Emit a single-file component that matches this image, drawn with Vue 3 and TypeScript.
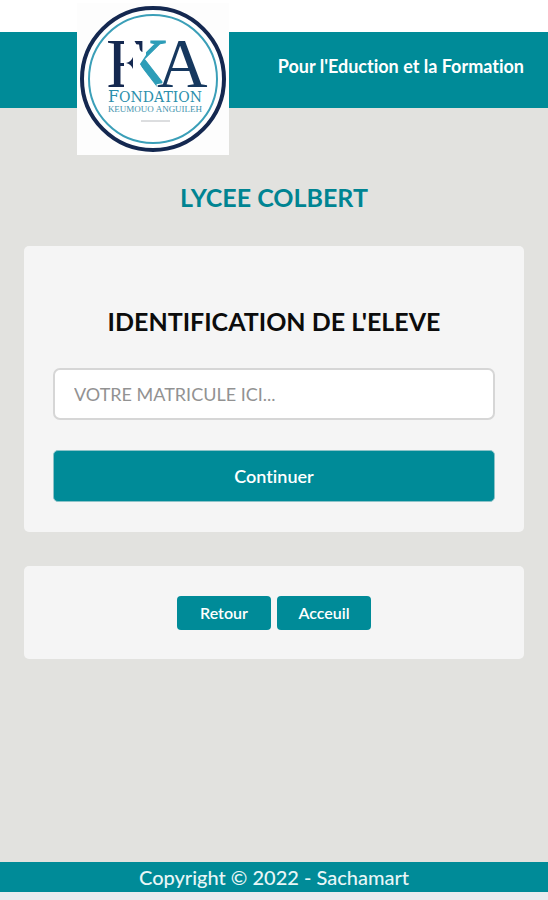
<script setup lang="ts">
import { ref } from 'vue'

const matricule = ref<string>('')
const links: { label: string; href: string }[] = [
  { label: 'Retour', href: '#retour' },
  { label: 'Acceuil', href: '#accueil' },
]
</script>

<template>
  <div class="page">
    <header class="header">
      <svg class="logo" viewBox="0 0 152 152" role="img" aria-label="Fondation Keumouo Anguileh">
        <defs>
          <clipPath id="stem-clip">
            <path d="M28 30H47V90H28ZM53 30H68V52L62 46Z" />
          </clipPath>
          <clipPath id="arm-clip">
            <path d="M69 30H100V90H78L63 61L69 52Z" />
          </clipPath>
        </defs>
        <rect width="152" height="152" fill="#fdfdfd" />
        <circle cx="76" cy="76" r="71" fill="#fff" stroke="#142850" stroke-width="4" />
        <circle cx="76" cy="76" r="64" fill="none" stroke="#3b9fb8" stroke-width="2" />
        <g class="mark">
          <text class="navy" x="29" y="84" clip-path="url(#stem-clip)">F</text>
          <path class="navy" d="M56 54V66Q54 61 49 60Q54 59 56 54Z" />
          <text class="teal" x="42" y="84" clip-path="url(#arm-clip)">K</text>
          <text class="front" x="80" y="84">A</text>
        </g>
        <text class="name" x="78" y="99" text-anchor="middle"><tspan class="initial">F</tspan>ONDATION</text>
        <text class="family" x="78" y="109" text-anchor="middle">KEUMOUO ANGUILEH</text>
        <path d="M64 118H93" stroke="#b9bcc0" stroke-width="1" />
      </svg>
      <p class="slogan">Pour l'Eduction et la Formation</p>
    </header>

    <main class="content">
      <h1 class="school">LYCEE COLBERT</h1>
      <form class="card form" @submit.prevent>
        <h2 class="title"><label for="matricule">IDENTIFICATION DE L'ELEVE</label></h2>
        <input id="matricule" v-model="matricule" class="field" type="text" placeholder="VOTRE MATRICULE ICI..." />
        <button class="submit" type="submit">Continuer</button>
      </form>
      <nav class="card links">
        <a v-for="link in links" :key="link.label" class="link" :href="link.href">{{ link.label }}</a>
      </nav>
    </main>

    <footer class="footer">Copyright © 2022 - Sachamart</footer>
  </div>
</template>

<style>
body {
  margin: 0;
  background: #e9ebee;
}
</style>

<style scoped>
.page {
  box-sizing: border-box;
  min-height: calc(100vh - 8px);
  display: flex;
  flex-direction: column;
  padding-top: 32px;
  background: linear-gradient(#fff 32px, #e2e2df 32px);
  font-family: Lato, "Liberation Sans", sans-serif;
  font-variant-ligatures: none;
}
.header {
  position: relative;
  display: flex;
  align-items: center;
  justify-content: flex-end;
  box-sizing: border-box;
  min-height: 76px;
  padding: 0 24px 8px;
  background: #008b98;
}
.logo {
  position: absolute;
  left: 14%;
  top: -29px;
  width: 152px;
  height: 152px;
}
.mark {
  font-family: "Liberation Serif", serif;
  font-size: 70px;
}
.navy {
  fill: #142850;
}
.teal {
  fill: #2d9db8;
  stroke: #2d9db8;
  stroke-width: 1px;
}
.front {
  fill: #16385f;
  stroke: #fff;
  stroke-width: 2px;
  paint-order: stroke;
}
.name {
  font-family: "DejaVu Serif", serif;
  font-size: 14px;
  fill: #2d8fac;
}
.initial {
  font-size: 16px;
}
.family {
  font-family: "Liberation Serif", serif;
  font-size: 9px;
  fill: #3f93ad;
}
.slogan {
  margin: 0;
  color: #fff;
  font-size: 18px;
  line-height: 24px;
  font-weight: 700;
}
.content {
  flex: 1;
  display: flex;
  flex-direction: column;
  padding: 72px 24px 24px;
}
.school {
  margin: 0 0 32px;
  color: #008492;
  font-size: 25px;
  line-height: 34px;
  font-weight: 700;
  text-align: center;
}
.card {
  border-radius: 5px;
  background: #f5f5f5;
}
.form {
  display: flex;
  flex-direction: column;
  padding: 58px 29px 30px;
}
.title {
  margin: 0 0 30px;
  color: #0c0c0c;
  font-size: 25px;
  line-height: 34px;
  font-weight: 700;
  text-align: center;
}
.field {
  box-sizing: border-box;
  width: 100%;
  height: 52px;
  margin-bottom: 30px;
  padding: 0 19px;
  border: 2px solid #d6d6d6;
  border-radius: 7px;
  background: #fff;
  color: #333;
  font-family: inherit;
  font-size: 18px;
}
.field::placeholder {
  color: #929292;
  opacity: 1;
}
.submit {
  height: 52px;
  padding: 0;
  border: 1px solid #8cc3c8;
  border-radius: 5px;
  background: #008b98;
  color: #fff;
  font-family: inherit;
  font-size: 18px;
  font-variant-ligatures: none;
  font-weight: 600;
}
.links {
  display: flex;
  justify-content: center;
  gap: 6px;
  margin-top: 34px;
  padding: 30px 24px 29px;
}
.link {
  min-width: 94px;
  border-radius: 4px;
  background: #008b98;
  color: #fff;
  font-size: 16px;
  line-height: 34px;
  font-weight: 600;
  text-align: center;
  text-decoration: none;
}
.footer {
  background: #008b98;
  color: #e8f6f7;
  font-size: 20px;
  line-height: 30px;
  font-weight: 500;
  text-align: center;
}
</style>
